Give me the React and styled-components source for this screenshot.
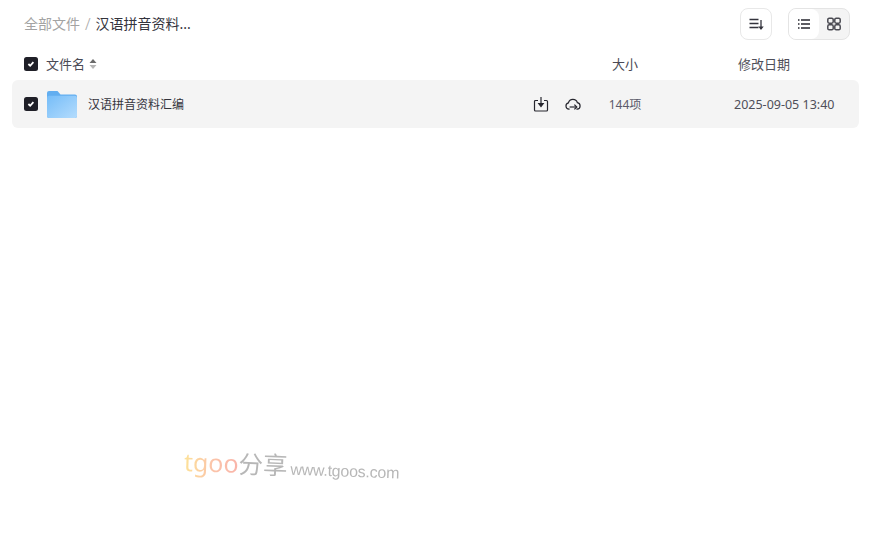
import styled, { createGlobalStyle } from "styled-components";

const GlobalStyle = createGlobalStyle`
  html, body {
    margin: 0;
    padding: 0;
    background: #fff;
  }
  body {
    font-family: "Noto Sans", "Noto Sans CJK SC", sans-serif;
    color: #3a3a44;
  }
`;

const Page = styled.div`
  position: relative;
  width: 874px;
  height: 538px;
  padding: 8px 15px 0 12px;
  box-sizing: border-box;
  overflow: hidden;
`;

const Toolbar = styled.div`
  display: flex;
  align-items: center;
  justify-content: space-between;
  height: 32px;
  padding: 0 9px 0 12px;
`;

const Breadcrumb = styled.div`
  display: flex;
  align-items: center;
  gap: 5px;
  font-size: 14px;
  padding-bottom: 2px;
`;

const Crumb = styled.span`
  color: ${(props) => (props.current ? "#33333c" : "#a3a3a3")};
`;

const Slash = styled.span`
  color: #a9a9a9;
  font-size: 16px;
  font-weight: 300;
  line-height: 1;
  margin-top: 2px;
`;

const Tools = styled.div`
  display: flex;
  gap: 16px;
`;

const SortButton = styled.div`
  width: 32px;
  height: 32px;
  box-sizing: border-box;
  border: 1px solid #e8e8e8;
  border-radius: 8px;
  display: flex;
  align-items: center;
  justify-content: center;
`;

const ViewToggle = styled.div`
  display: flex;
  width: 62px;
  height: 32px;
  box-sizing: border-box;
  border: 1px solid #e4e4e4;
  border-radius: 8px;
  background: #f4f4f4;
  overflow: hidden;
`;

const ViewOption = styled.div`
  flex: 1;
  display: flex;
  align-items: center;
  justify-content: center;
  background: ${(props) => (props.active ? "#fff" : "transparent")};
  border-radius: 0 8px 8px 0;
`;

const Grid = styled.div`
  display: grid;
  grid-template-columns: 1fr 70px 199px;
  align-items: center;
  padding-left: 12px;
`;

const HeaderRow = styled(Grid)`
  height: 32px;
  margin-top: 8px;
  font-size: 13px;
  color: #4a4a55;
`;

const FileRow = styled(Grid)`
  height: 48px;
  background: #f4f4f4;
  border-radius: 6px;
  font-size: 12px;
`;

const NameCell = styled.div`
  display: flex;
  align-items: center;
`;

const HeaderLabel = styled.span`
  display: inline-block;
  padding-bottom: 2px;
`;

const Checkbox = styled.span`
  flex: none;
  width: 14px;
  height: 14px;
  border-radius: 2.5px;
  background: #1f1f27;
  display: flex;
  align-items: center;
  justify-content: center;
  margin-right: ${(props) => props.gap}px;
`;

const FileName = styled.span`
  flex: 1;
  margin-left: 11px;
  color: #33333c;
`;

const Actions = styled.div`
  display: flex;
  gap: 16px;
  margin-right: 9px;
`;

const SizeCell = styled.div`
  text-align: center;
  color: ${(props) => props.color};
`;

const DateCell = styled.div`
  padding-left: ${(props) => props.offset}px;
  font-size: ${(props) => props.size}px;
  color: #4f4f59;
  white-space: nowrap;
`;

const SortCaret = styled.svg`
  margin-left: 4px;
`;

const Watermark = styled.div`
  position: absolute;
  left: 184px;
  top: 443px;
  display: flex;
  align-items: baseline;
  white-space: nowrap;
  transform: rotate(2deg);
  transform-origin: left center;
  opacity: 0.9;
`;

const MarkBrand = styled.span`
  font-family: "Noto Sans", sans-serif;
  font-size: 25px;
  background: linear-gradient(90deg, #fde08e, #fbbfa0 50%, #f9aca0);
  -webkit-background-clip: text;
  background-clip: text;
  color: transparent;
`;

const MarkCn = styled.span`
  font-size: 24.5px;
  color: #b0b0b0;
`;

const MarkUrl = styled.span`
  font-family: "Liberation Sans", sans-serif;
  font-size: 16px;
  letter-spacing: -0.25px;
  color: #b0b0b0;
  margin-left: 3px;
`;

const Check = () => (
  <svg width="10" height="10" viewBox="0 0 10 10" fill="none">
    <path d="M2.4 5 4.2 6.8 7.4 3.2" stroke="#fff" strokeWidth="1.8" />
  </svg>
);

const SortIcon = () => (
  <svg width="16" height="16" viewBox="0 0 16 16" fill="none" stroke="#33333c" strokeWidth="1.3">
    <path d="M1.5 3.5h9M1.5 7.5h9M1.5 11.5h9" />
    <path d="M13 4v8.5" />
    <path d="M11.6 11.2 13 13l1.4-1.8z" fill="#33333c" />
  </svg>
);

const ListIcon = () => (
  <svg width="14" height="14" viewBox="0 0 14 14" fill="none" stroke="#26262e" strokeWidth="1.3">
    <path d="M1 3h1.5M1 7h1.5M1 11h1.5M4 3h9M4 7h9M4 11h9" />
  </svg>
);

const GridIcon = () => (
  <svg width="14" height="14" viewBox="0 0 14 14" fill="none" stroke="#4a4a52" strokeWidth="1.5">
    <rect x="0.8" y="1.2" width="5.4" height="5" rx="1.4" />
    <rect x="7.8" y="1.2" width="5.4" height="5" rx="1.4" />
    <rect x="0.8" y="7.8" width="5.4" height="5" rx="1.4" />
    <rect x="7.8" y="7.8" width="5.4" height="5" rx="1.4" />
  </svg>
);

const SaveIcon = () => (
  <svg width="16" height="16" viewBox="0 0 16 16" fill="none" stroke="#26262e" strokeWidth="1.2">
    <path d="M5 4.5H2.5a1 1 0 0 0-1 1V14a1 1 0 0 0 1 1h11a1 1 0 0 0 1-1V5.5a1 1 0 0 0-1-1H11" />
    <path d="M8 1v7" />
    <path d="M5.8 7.6 8 10.6l2.2-3z" fill="#26262e" />
  </svg>
);

const CloudIcon = () => (
  <svg width="16" height="16" viewBox="0 0 16 16" fill="none" stroke="#26262e" strokeWidth="1.2">
    <path d="M4.6 13.2H4A3.2 3.2 0 0 1 3.4 6.9a4.7 4.7 0 0 1 9-.2 3.3 3.3 0 0 1 2.7 3.3 3.2 3.2 0 0 1-3.1 3.2h-.6" />
    <path d="M4.6 11h6.4" />
    <path d="M9.4 8.6 11.8 11l-2.4 2.4" />
  </svg>
);

const FolderIcon = () => (
  <svg width="30" height="27" viewBox="0 0 30 28" preserveAspectRatio="none" style={{ flex: "none" }}>
    <defs>
      <linearGradient id="folderFill" x1="0" y1="0" x2="1" y2="1">
        <stop offset="0" stopColor="#76bdf8" />
        <stop offset="1" stopColor="#b4dcfd" />
      </linearGradient>
    </defs>
    <path d="M0 2a2 2 0 0 1 2-2h8.5l3 3.5H28a2 2 0 0 1 2 2V26a2 2 0 0 1-2 2H2a2 2 0 0 1-2-2z" fill="#62aef0" />
    <path d="M0 7a2 2 0 0 1 2-2h26a2 2 0 0 1 2 2v19a2 2 0 0 1-2 2H2a2 2 0 0 1-2-2z" fill="url(#folderFill)" />
  </svg>
);

export default function App() {
  return (
    <>
      <GlobalStyle />
      <Page>
        <Toolbar>
          <Breadcrumb>
            <Crumb>全部文件</Crumb>
            <Slash>/</Slash>
            <Crumb current>汉语拼音资料...</Crumb>
          </Breadcrumb>
          <Tools>
            <SortButton>
              <SortIcon />
            </SortButton>
            <ViewToggle>
              <ViewOption active>
                <ListIcon />
              </ViewOption>
              <ViewOption>
                <GridIcon />
              </ViewOption>
            </ViewToggle>
          </Tools>
        </Toolbar>
        <HeaderRow>
          <NameCell>
            <Checkbox gap={8}>
              <Check />
            </Checkbox>
            <HeaderLabel>文件名</HeaderLabel>
            <SortCaret width="8" height="12" viewBox="0 0 8 12">
              <path d="M4 1 7.5 5H.5z" fill="#6a6a6a" />
              <path d="M4 11 .5 7h7z" fill="#b5b5b5" />
            </SortCaret>
          </NameCell>
          <SizeCell color="#4a4a55"><HeaderLabel>大小</HeaderLabel></SizeCell>
          <DateCell offset={78} size={13}><HeaderLabel>修改日期</HeaderLabel></DateCell>
        </HeaderRow>
        <FileRow>
          <NameCell>
            <Checkbox gap={9}>
              <Check />
            </Checkbox>
            <FolderIcon />
            <FileName>汉语拼音资料汇编</FileName>
            <Actions>
              <SaveIcon />
              <CloudIcon />
            </Actions>
          </NameCell>
          <SizeCell color="#5a5a6a">144项</SizeCell>
          <DateCell offset={74} size={12.5}>2025-09-05 13:40</DateCell>
        </FileRow>
        <Watermark>
          <MarkBrand>tgoo</MarkBrand>
          <MarkCn>分享</MarkCn>
          <MarkUrl>www.tgoos.com</MarkUrl>
        </Watermark>
      </Page>
    </>
  );
}
